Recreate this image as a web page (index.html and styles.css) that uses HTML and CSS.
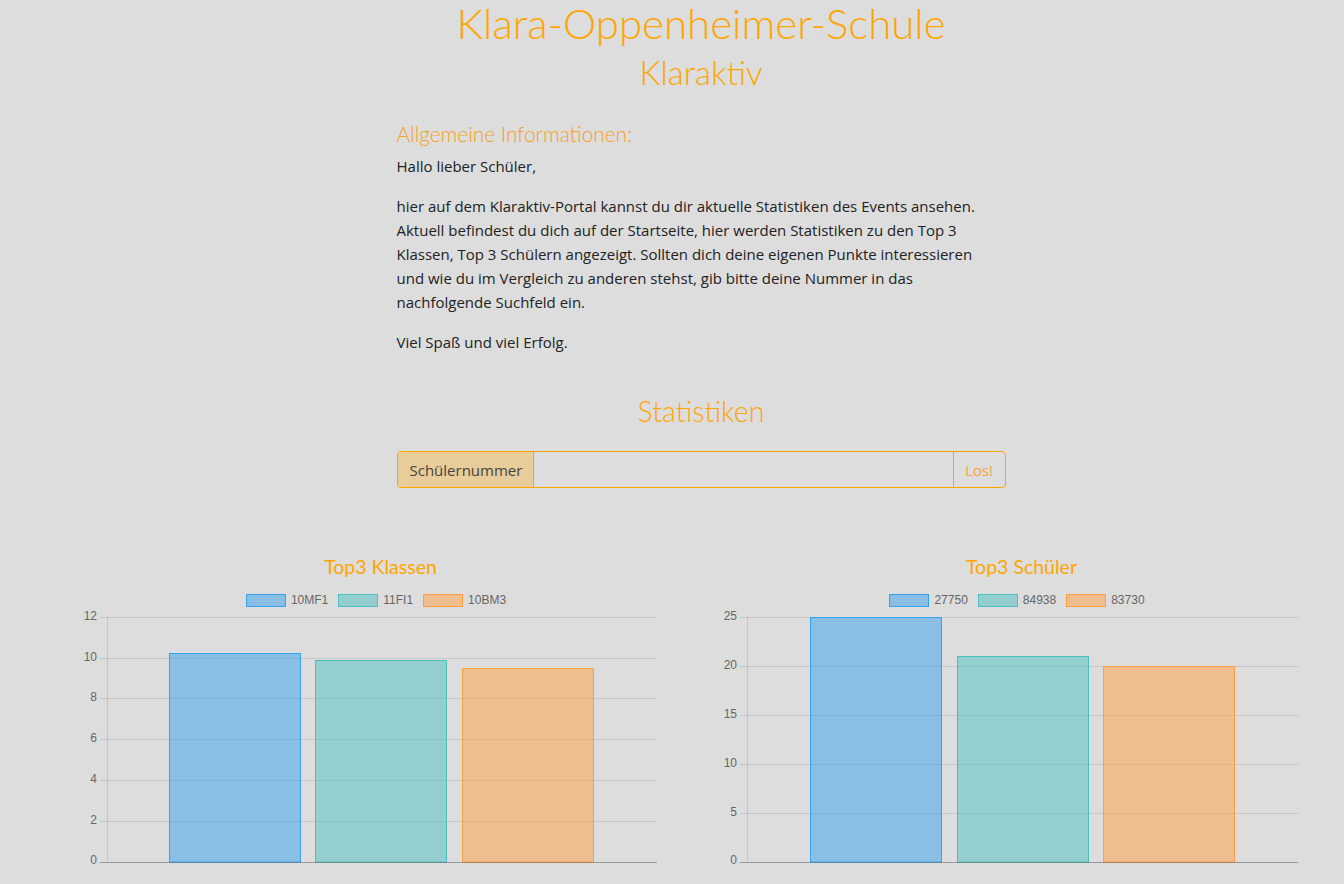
FILE: index.html
```html
<!DOCTYPE html>
<html lang="de">
<head>
<meta charset="utf-8">
<title>Klaraktiv</title>
<link rel="stylesheet" href="styles.css">
</head>
<body>
<header class="masthead">
  <h1 class="site-title">Klara-Oppenheimer-Schule</h1>
  <h2 class="site-subtitle">Klaraktiv</h2>
</header>
<main class="page">
  <section class="intro">
    <h3 class="intro-title">Allgemeine Informationen:</h3>
    <p>Hallo lieber Schüler,</p>
    <p>hier auf dem Klaraktiv-Portal kannst du dir aktuelle Statistiken des Events ansehen. Aktuell befindest du dich auf der Startseite, hier werden Statistiken zu den Top 3 Klassen, Top 3 Schülern angezeigt. Sollten dich deine eigenen Punkte interessieren und wie du im Vergleich zu anderen stehst, gib bitte deine Nummer in das nachfolgende Suchfeld ein.</p>
    <p>Viel Spaß und viel Erfolg.</p>
  </section>
  <section class="stats">
    <h2 class="stats-title">Statistiken</h2>
    <form class="input-group">
      <span class="addon">Schülernummer</span>
      <input class="field" type="text" aria-label="Schülernummer">
      <button class="go" type="button">Los!</button>
    </form>
  </section>
  <section class="charts">
    <figure class="chart">
      <h4 class="chart-title">Top3 Klassen</h4>
      <ul class="legend">
        <li><span class="swatch blue"></span>10MF1</li>
        <li><span class="swatch teal"></span>11FI1</li>
        <li><span class="swatch orange"></span>10BM3</li>
      </ul>
      <svg class="plot" width="641" height="270" viewBox="0 0 641 270">
        <g class="grid">
          <line x1="40" y1="12.5" x2="597" y2="12.5"/>
          <line x1="40" y1="53.5" x2="597" y2="53.5"/>
          <line x1="40" y1="93.5" x2="597" y2="93.5"/>
          <line x1="40" y1="134.5" x2="597" y2="134.5"/>
          <line x1="40" y1="175.5" x2="597" y2="175.5"/>
          <line x1="40" y1="216.5" x2="597" y2="216.5"/>
          <line x1="47.5" y1="12" x2="47.5" y2="257"/>
        </g>
        <g class="ticks">
          <text x="37" y="12">12</text>
          <text x="37" y="53">10</text>
          <text x="37" y="93">8</text>
          <text x="37" y="134">6</text>
          <text x="37" y="175">4</text>
          <text x="37" y="216">2</text>
          <text x="37" y="256">0</text>
        </g>
        <rect class="bar blue" x="109.5" y="48.5" width="131" height="208.5"/>
        <rect class="bar teal" x="255.5" y="55.5" width="131" height="201.5"/>
        <rect class="bar orange" x="402.5" y="63.5" width="131" height="193.5"/>
        <line class="zero" x1="40" y1="257.5" x2="597" y2="257.5"/>
      </svg>
    </figure>
    <figure class="chart">
      <h4 class="chart-title">Top3 Schüler</h4>
      <ul class="legend">
        <li><span class="swatch blue"></span>27750</li>
        <li><span class="swatch teal"></span>84938</li>
        <li><span class="swatch orange"></span>83730</li>
      </ul>
      <svg class="plot" width="641" height="270" viewBox="0 0 641 270">
        <g class="grid">
          <line x1="39" y1="12.5" x2="597" y2="12.5"/>
          <line x1="39" y1="61.5" x2="597" y2="61.5"/>
          <line x1="39" y1="110.5" x2="597" y2="110.5"/>
          <line x1="39" y1="159.5" x2="597" y2="159.5"/>
          <line x1="39" y1="208.5" x2="597" y2="208.5"/>
          <line x1="46.5" y1="12" x2="46.5" y2="257"/>
        </g>
        <g class="ticks">
          <text x="36" y="12">25</text>
          <text x="36" y="61">20</text>
          <text x="36" y="110">15</text>
          <text x="36" y="159">10</text>
          <text x="36" y="208">5</text>
          <text x="36" y="256">0</text>
        </g>
        <rect class="bar blue" x="109.5" y="12.5" width="131" height="244.5"/>
        <rect class="bar teal" x="256.5" y="51.5" width="131" height="205.5"/>
        <rect class="bar orange" x="402.5" y="61.5" width="131" height="195.5"/>
        <line class="zero" x1="39" y1="257.5" x2="597" y2="257.5"/>
      </svg>
    </figure>
  </section>
</main>
</body>
</html>
```

FILE: styles.css
```css
html, body {
  margin: 0;
  padding: 0;
  background: #dddddd;
  overflow-x: hidden;
}
body {
  font-family: "Open Sans", "Noto Sans", sans-serif;
  font-size: 15px;
  line-height: 24px;
  color: #222;
}
.masthead {
  margin-left: 59px;
  width: 1284px;
  text-align: center;
  font-family: "Lato", "Open Sans", sans-serif;
}
.site-title {
  margin: 0;
  font-weight: 300;
  font-size: 42px;
  line-height: 46px;
  color: #ffa500;
}
.site-subtitle {
  margin: 2px 0 0;
  font-weight: 300;
  font-size: 33px;
  line-height: 48px;
  color: #ffa500;
}
.page {
  margin-left: 59px;
  width: 1284px;
}
.intro {
  width: 609px;
  margin: 26px auto 0;
}
.intro-title {
  margin: -2px 0 6px;
  font-family: "Lato", "Open Sans", sans-serif;
  font-weight: 300;
  font-size: 20.8px;
  line-height: 28px;
  color: #f5a020;
}
.intro p {
  margin: 0 0 16px;
  padding-right: 21px;
}
.stats {
  width: 609px;
  margin: 39px auto 0;
}
.stats-title {
  margin: 0 0 22px;
  text-align: center;
  font-family: "Lato", "Open Sans", sans-serif;
  font-weight: 300;
  font-size: 28.6px;
  line-height: 36px;
  color: #ffa500;
}
.input-group {
  display: flex;
  height: 37px;
  border: 1px solid #ffa500;
  border-radius: 4px;
  box-sizing: border-box;
  overflow: hidden;
  margin: 0;
}
.addon {
  display: flex;
  align-items: center;
  padding: 0 12px;
  width: 136px;
  box-sizing: border-box;
  background: #e8cc99;
  border-right: 1px solid #ffa500;
  color: #444;
}
.field {
  flex: 1;
  border: 0;
  background: transparent;
  font: inherit;
  padding: 0 12px;
  outline: none;
}
.go {
  width: 52px;
  border: 0;
  border-left: 1px solid #ffa500;
  background: transparent;
  color: #f9a53a;
  font: inherit;
  padding: 0;
  cursor: pointer;
}
.charts {
  display: grid;
  grid-template-columns: 641px 641px;
  margin-top: 66px;
  margin-left: 1px;
}
.chart {
  margin: 0;
}
.plot {
  display: block;
  margin-top: -2px;
}
.chart-title {
  margin: 0;
  text-align: center;
  font-family: "Lato", "Open Sans", sans-serif;
  font-weight: 400;
  font-size: 19.5px;
  line-height: 26px;
  color: #ffa500;
}
.legend {
  list-style: none;
  margin: 13px 0 0;
  padding: 0 9px 0 0;
  display: flex;
  justify-content: center;
  gap: 10px;
  font-family: "Liberation Sans", Arial, sans-serif;
  font-size: 12px;
  line-height: 14px;
  color: #666;
}
.legend li {
  display: flex;
  align-items: center;
  gap: 5px;
}
.swatch {
  display: inline-block;
  width: 38px;
  height: 11px;
}
.swatch.blue { background: rgba(54, 162, 235, 0.5); border: 1px solid rgb(54, 162, 235); }
.swatch.teal { background: rgba(75, 192, 192, 0.5); border: 1px solid rgb(75, 192, 192); }
.swatch.orange { background: rgba(255, 159, 64, 0.5); border: 1px solid rgb(255, 159, 64); }
.grid line {
  stroke: rgba(0, 0, 0, 0.1);
  stroke-width: 1;
}
.zero {
  stroke: rgba(0, 0, 0, 0.3);
  stroke-width: 1;
}
.ticks text {
  font-family: "Liberation Sans", Arial, sans-serif;
  font-size: 12px;
  fill: #666;
  text-anchor: end;
  dominant-baseline: middle;
}
.bar { stroke-width: 1; }
.bar.blue { fill: rgba(54, 162, 235, 0.5); stroke: rgb(54, 162, 235); }
.bar.teal { fill: rgba(75, 192, 192, 0.5); stroke: rgb(75, 192, 192); }
.bar.orange { fill: rgba(255, 159, 64, 0.5); stroke: rgb(255, 159, 64); }
```
